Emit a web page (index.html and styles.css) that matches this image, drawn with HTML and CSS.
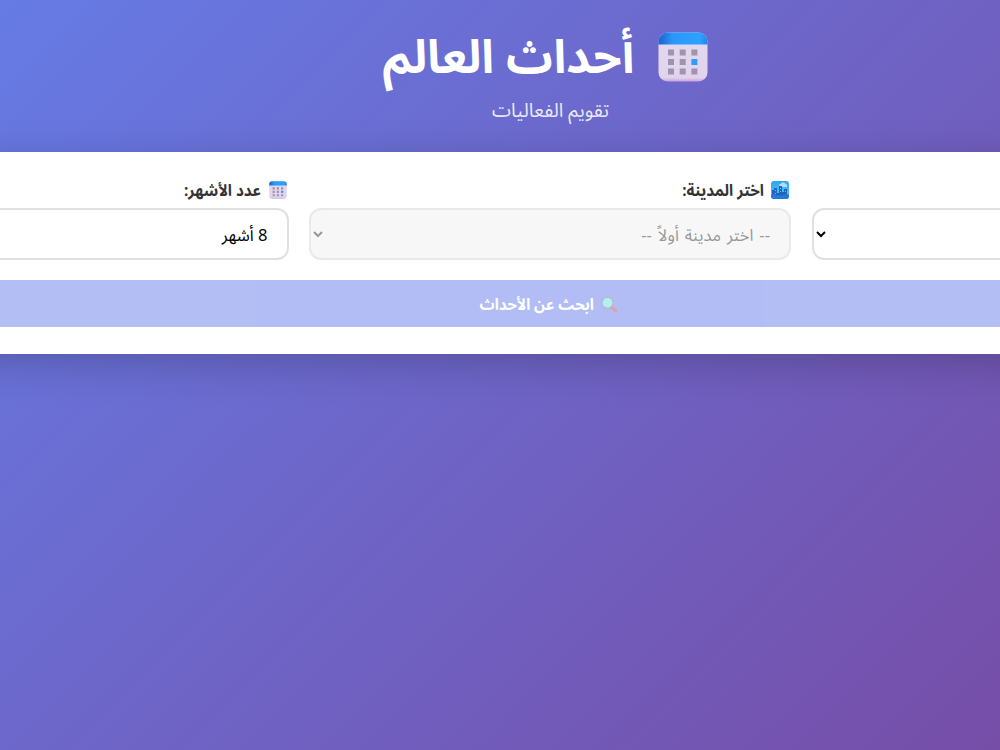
FILE: index.html
```html
<!DOCTYPE html>
<html lang="ar">
<head>
    <meta charset="UTF-8">
    <meta name="viewport" content="width=device-width, initial-scale=1.0">
    <title>أحداث العالم</title>
    <link rel="stylesheet" href="styles.css">
</head>
<body>
    <svg class="defs" width="0" height="0" aria-hidden="true">
        <defs>
            <linearGradient id="calTop" x1="0" x2="1" y1="0" y2="0">
                <stop offset="0" stop-color="#1c62cc"/>
                <stop offset="0.3" stop-color="#2c97fb"/>
                <stop offset="0.85" stop-color="#2ba2ff"/>
                <stop offset="1" stop-color="#2a82e6"/>
            </linearGradient>
            <linearGradient id="calBody" x1="0" x2="0" y1="0" y2="1">
                <stop offset="0" stop-color="#e3d9f0"/>
                <stop offset="0.92" stop-color="#e1d3ec"/>
                <stop offset="1" stop-color="#c9a2e0"/>
            </linearGradient>
            <linearGradient id="sky" x1="0" x2="0" y1="0" y2="1">
                <stop offset="0" stop-color="#2fa5f2"/>
                <stop offset="1" stop-color="#58c8f5"/>
            </linearGradient>
            <symbol id="calendar" viewBox="0 0 50 50">
                <rect x="0.5" y="0.5" width="49" height="49" rx="9" fill="url(#calBody)"/>
                <path d="M0.5 12.5V9.5a9 9 0 0 1 9-9h31a9 9 0 0 1 9 9v3z" fill="url(#calTop)"/>
                <path d="M10 17.500h6v6h-6zM21.700 17.500h6v6h-6zM33.400 17.500h6v6h-6zM10 27h6v6h-6zM21.700 27h6v6h-6zM10 36.500h6v6h-6zM21.700 36.500h6v6h-6zM33.400 36.500h6v6h-6z" fill="#a093ad"/>
                <path d="M33.400 27h6v6h-6z" fill="#2b9cf8"/>
            </symbol>
            <symbol id="city" viewBox="0 0 18 18">
                <rect width="18" height="18" rx="3" fill="url(#sky)"/>
                <path d="M8 4.500q0-2 2-1.500 0-2 2.500-1.500 2 0 2 1.500 2 0 1.500 3H9z" fill="#b9dcfb"/>
                <path d="M1 9h2V7h3v5h2V5h3v6h2V8h3v8H1z" fill="#2065bb"/>
                <path d="M4 9h1v1H4zM9 7h1v1H9zM9 10h1v1H9zM14 10h1v1h-1zM4 12h1v1H4z" fill="#63c7fa"/>
                <path d="M0 13.500h4l2 1h5l2-1h5V15a3 3 0 0 1-3 3H3a3 3 0 0 1-3-3z" fill="#2479d5"/>
            </symbol>
            <symbol id="search" viewBox="0 0 18 18">
                <path d="M11 10.500l4.800 4.500" stroke="#b8456c" stroke-width="3.200" stroke-linecap="round"/>
                <circle cx="7.500" cy="6.800" r="5.600" fill="#65e0ec" stroke="#6f7486" stroke-width="1.300"/>
            </symbol>
        </defs>
    </svg>

    <div class="container" dir="rtl">
        <header class="header">
            <h1><svg class="icon-title"><use href="#calendar"/></svg><span>أحداث العالم</span></h1>
            <p><span>تقويم الفعاليات</span></p>
        </header>

        <form class="search-box">
            <div class="form-row">
                <div class="form-group">
                    <label for="country">&nbsp;</label>
                    <select id="country">
                        <option></option>
                    </select>
                </div>
                <div class="form-group">
                    <label for="city-select"><svg class="icon"><use href="#city"/></svg><span>اختر المدينة:</span></label>
                    <select id="city-select" disabled>
                        <option>-- اختر مدينة أولاً --</option>
                    </select>
                </div>
                <div class="form-group">
                    <label for="months"><svg class="icon"><use href="#calendar"/></svg><span>عدد الأشهر:</span></label>
                    <select id="months">
                        <option>8 أشهر</option>
                    </select>
                </div>
            </div>
            <button class="search-btn" type="button" disabled><svg class="icon"><use href="#search"/></svg><span>ابحث عن الأحداث</span></button>
        </form>
    </div>
</body>
</html>
```
FILE: styles.css
```css
* {
  margin: 0;
  padding: 0;
  box-sizing: border-box;
}
body {
  height: 100vh;
  overflow: hidden;
  font-family: "Segoe UI", "Noto Sans Arabic", "Noto Sans", "DejaVu Sans", sans-serif;
  background: linear-gradient(135deg, #667be5 0%, #764ea8 100%);
}
.defs {
  display: block;
}
.container {
  width: 1540px;
  margin-left: -220px;
}
.header {
  height: 152px;
  padding-top: 31px;
  color: #fff;
  text-align: center;
}
.header h1 {
  display: flex;
  justify-content: center;
  gap: 24px;
  height: 62px;
  padding-right: 9px;
  font-size: 46.4px;
  line-height: 54px;
}
.icon-title {
  width: 50px;
  height: 50px;
  margin-top: 0.5px;
}
.header p {
  font-size: 19.2px;
  line-height: 36px;
  padding-left: 1px;
  opacity: 0.85;
}
.search-box {
  height: 202px;
  padding: 27px 26px;
  background: #fff;
  box-shadow: 0 10px 40px rgba(0, 0, 0, 0.2);
}
.form-row {
  display: grid;
  grid-template-columns: repeat(3, 482px);
  justify-content: center;
  gap: 20.500px;
}
.form-group label {
  display: flex;
  align-items: center;
  gap: 7px;
  height: 22px;
  margin-bottom: 7px;
  padding-right: 2px;
  color: #333;
  font-size: 16.200px;
  font-weight: bold;
}
.form-group label span {
  padding-top: 2px;
  transform: scaleX(0.94);
  transform-origin: right;
}
.icon {
  width: 18px;
  height: 18px;
}
.form-group select {
  display: block;
  width: 100%;
  height: 52px;
  padding: 2px 15px 0;
  border: 2px solid #e0e0e0;
  border-radius: 12px;
  background: #fff;
  color: #000;
  font-family: inherit;
  font-size: 16.600px;
}
.form-group select:disabled {
  background: #f5f5f5;
  color: #6d6d6d;
  opacity: 0.7;
  word-spacing: 1.600px;
}
.search-btn {
  display: flex;
  justify-content: center;
  align-items: center;
  gap: 7px;
  width: 100%;
  height: 47px;
  margin-top: 20px;
  padding: 3px 11px 0 0;
  border: 0;
  background: #667eea;
  color: #fff;
  font-family: inherit;
  font-size: 16px;
  font-weight: bold;
  opacity: 0.5;
}
.search-btn span {
  transform: scaleX(0.93);
  transform-origin: right;
}
```
